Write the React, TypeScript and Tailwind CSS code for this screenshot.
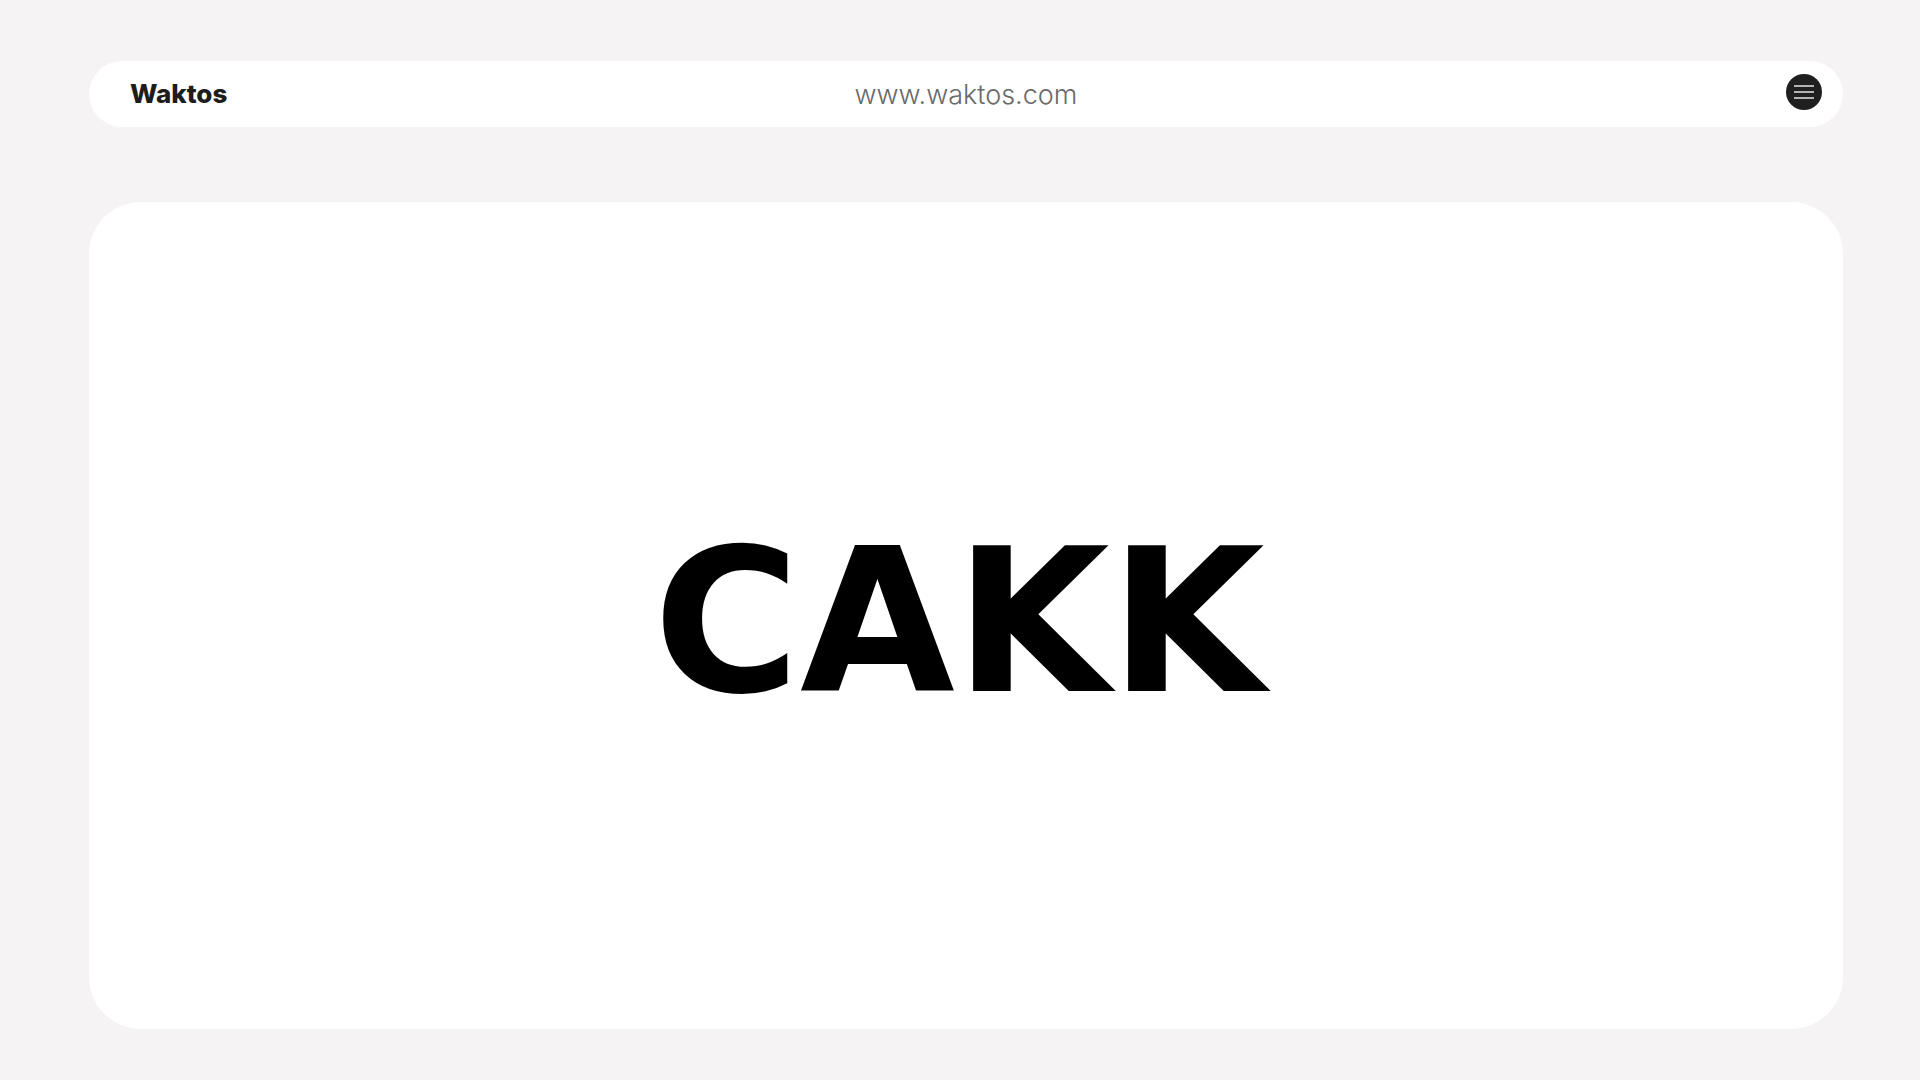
import React from "react";

export default function App() {
  return (
    <div className="min-h-screen w-full bg-[#f5f3f3] pl-[89px] pr-[77px] pt-[61px] pb-[51px] flex flex-col">
      <header className="h-[66px] w-full bg-white rounded-full flex items-center justify-between pl-[41px] pr-[21px] relative">
        <span
          className="text-[26px] font-extrabold text-[#1d1d1d] leading-none"
          style={{ fontFamily: "Inter, 'Noto Sans', sans-serif" }}
        >
          Waktos
        </span>
        <span
          className="absolute left-1/2 -translate-x-1/2 text-[27px] font-light text-[#6a6a6a] leading-none"
          style={{ fontFamily: "Inter, 'Noto Sans', sans-serif" }}
        >
          www.waktos.com
        </span>
        <button className="w-[36px] h-[36px] rounded-full bg-[#1f1f1f] flex items-center justify-center -mt-[4px]">
          <svg width="20" height="14" viewBox="0 0 20 14">
            <line x1="0" y1="1" x2="20" y2="1" stroke="#e5e5e5" strokeWidth="1.5" />
            <line x1="0" y1="7" x2="20" y2="7" stroke="#e5e5e5" strokeWidth="1.5" />
            <line x1="0" y1="13" x2="20" y2="13" stroke="#e5e5e5" strokeWidth="1.5" />
          </svg>
        </button>
      </header>
      <main className="mt-[75px] h-[827px] w-full bg-white rounded-[52px] flex items-center justify-center pr-[14px] pt-[12px]">
        <h1
          className="text-[200px] font-bold text-black leading-none"
          style={{ fontFamily: "'DejaVu Sans', sans-serif" }}
        >
          CAKK
        </h1>
      </main>
    </div>
  );
}
